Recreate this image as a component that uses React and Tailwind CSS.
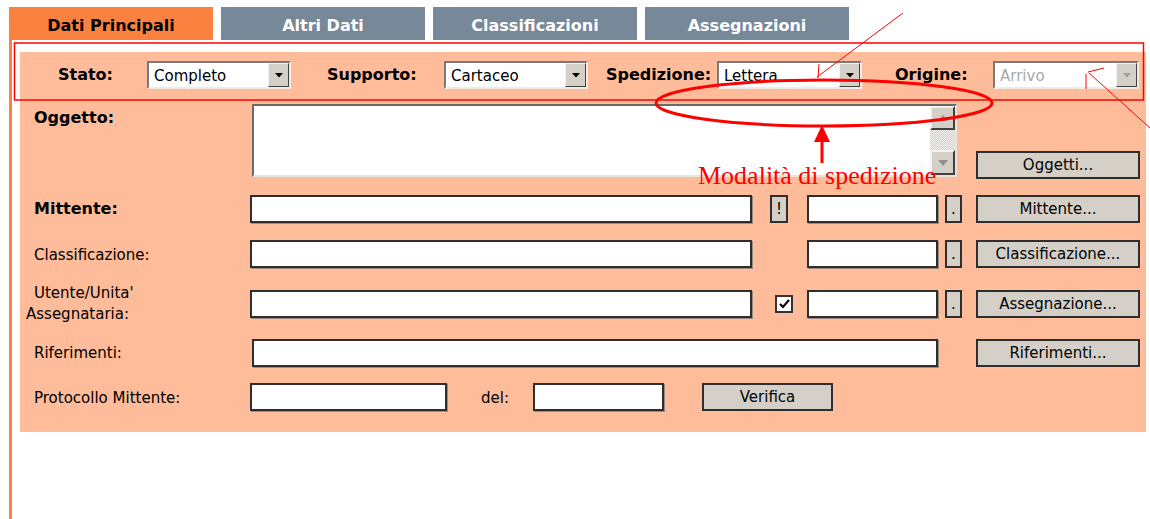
import React from "react";

const FONT = "font-['DejaVu_Sans','Liberation_Sans',sans-serif]";

function Tab({ label, active }) {
  return (
    <div
      className={`w-[204px] h-[33px] pt-[4px] flex items-center justify-center text-[16px] font-bold ${
        active ? "bg-[#fb8140] text-black" : "bg-[#778899] text-white"
      }`}
    >
      {label}
    </div>
  );
}

function Select({ className, value, disabled }) {
  return (
    <div
      className={`flex h-[28px] bg-white border-2 border-t-[#7a7a7a] border-l-[#7a7a7a] border-b-[#f0ece4] border-r-[#f0ece4] ${className}`}
    >
      <div className={`flex-1 flex items-center pl-[5px] pt-[2px] text-[15px] ${disabled ? "text-[#a8a8a8]" : "text-black"}`}>
        {value}
      </div>
      <div className="w-[21px] bg-[#d4d0c8] border border-t-[#f4f2ee] border-l-[#f4f2ee] border-b-[#404040] border-r-[#404040] flex items-center justify-center">
        <svg width="8" height="5" viewBox="0 0 8 5">
          <path d="M0 0H8L4 4.5Z" fill={disabled ? "#a0a0a0" : "#000"} />
        </svg>
      </div>
    </div>
  );
}

function Input({ className }) {
  return <div className={`h-[28px] bg-white border-2 border-[#2e2e2e] shadow-[1px_1px_0_#9a8a80] ${className}`} />;
}

function Btn({ children, className }) {
  return (
    <div
      className={`h-[28px] pt-[1px] bg-[#d4d0c8] border-2 border-[#2e2e2e] flex items-center justify-center text-[15px] text-black ${className}`}
    >
      {children}
    </div>
  );
}

function Label({ children, bold, className = "" }) {
  return <div className={`text-[15px] text-black ${bold ? "font-bold text-[16px]" : ""} ${className}`}>{children}</div>;
}

export default function App() {
  return (
    <div className={`relative w-[1150px] h-[519px] bg-white overflow-hidden ${FONT}`}>
      {/* tabs */}
      <div className="flex gap-[8px] pl-[9px] pt-[7px]">
        <Tab label="Dati Principali" active />
        <Tab label="Altri Dati" />
        <Tab label="Classificazioni" />
        <Tab label="Assegnazioni" />
      </div>

      <div className="ml-[9px] h-[479px] border-l-[3px] border-[#fb8140] pl-[8px] pt-[12px]">
        <div className="w-[1126px] h-[380px] bg-[#ffbc9a] pt-[8px]">
          {/* stato row */}
          <div className="flex items-center h-[28px] pl-[38px] pt-[2px]">
            <Label bold className="w-[89px]">Stato:</Label>
            <Select className="w-[144px]" value="Completo" />
            <Label bold className="ml-[36px] w-[117px]">Supporto:</Label>
            <Select className="w-[144px]" value="Cartaceo" />
            <Label bold className="ml-[18px] w-[111px]">Spedizione:</Label>
            <Select className="w-[145px]" value="Lettera" />
            <Label bold className="ml-[33px] w-[98px]">Origine:</Label>
            <Select className="w-[146px]" value="Arrivo" disabled />
          </div>

          {/* oggetto */}
          <div className="flex mt-[16px] pl-[14px] h-[75px]">
            <Label bold className="w-[218px] pt-[2px]">Oggetto:</Label>
            <div className="w-[705px] h-[73px] flex bg-white border-2 border-t-[#6a6a6a] border-l-[#6a6a6a] border-b-[#e8e4dc] border-r-[#e8e4dc]">
              <div className="flex-1" />
              <div className="w-[25px] flex flex-col bg-[repeating-conic-gradient(#d4d0c8_0_25%,#f2f0ec_0_50%)] bg-[length:2px_2px]">
                <div className="h-[24px] bg-[#d4d0c8] border-2 border-t-[#f4f2ee] border-l-[#f4f2ee] border-b-[#404040] border-r-[#404040] flex items-center justify-center">
                  <svg width="10" height="6" viewBox="0 0 10 6">
                    <path d="M0 6H10L5 0Z" fill="#909090" />
                  </svg>
                </div>
                <div className="flex-1" />
                <div className="h-[25px] bg-[#d4d0c8] border-2 border-t-[#f4f2ee] border-l-[#f4f2ee] border-b-[#404040] border-r-[#404040] flex items-center justify-center">
                  <svg width="10" height="6" viewBox="0 0 10 6">
                    <path d="M0 0H10L5 6Z" fill="#909090" />
                  </svg>
                </div>
              </div>
            </div>
            <div className="flex-1 flex items-end pl-[19px]">
              <Btn className="w-[164px]">Oggetti...</Btn>
            </div>
          </div>

          {/* mittente */}
          <div className="flex items-center mt-[16px] pl-[14px] h-[28px]">
            <Label bold className="w-[216px]">Mittente:</Label>
            <Input className="w-[502px]" />
            <Btn className="ml-[18px] w-[18px] text-[14px]">!</Btn>
            <Input className="ml-[19px] w-[131px]" />
            <Btn className="ml-[7px] w-[17px] text-[14px]">.</Btn>
            <Btn className="ml-[14px] w-[164px]">Mittente...</Btn>
          </div>

          {/* classificazione */}
          <div className="flex items-center mt-[17px] pl-[14px] h-[28px]">
            <Label className="w-[216px] pt-[2px]">Classificazione:</Label>
            <Input className="w-[502px]" />
            <Input className="ml-[55px] w-[131px]" />
            <Btn className="ml-[7px] w-[17px] text-[14px]">.</Btn>
            <Btn className="ml-[14px] w-[164px]">Classificazione...</Btn>
          </div>

          {/* utente */}
          <div className="flex items-center mt-[20px] pl-[6px] h-[32px]">
            <div className="w-[224px] text-[15px] leading-[21px] text-black">
              <div className="pl-[8px]">Utente/Unita'</div>
              <div>Assegnataria:</div>
            </div>
            <Input className="w-[502px]" />
            <div className="ml-[23px] w-[18px] h-[18px] bg-white border-2 border-[#333] flex items-center justify-center">
              <svg width="11" height="10" viewBox="0 0 11 10">
                <path d="M1 5L4 8L10 1" stroke="#000" strokeWidth="2.2" fill="none" />
              </svg>
            </div>
            <Input className="ml-[14px] w-[131px]" />
            <Btn className="ml-[7px] w-[17px] text-[14px]">.</Btn>
            <Btn className="ml-[14px] w-[164px]">Assegnazione...</Btn>
          </div>

          {/* riferimenti */}
          <div className="flex items-center mt-[18px] pl-[14px] h-[29px]">
            <Label className="w-[218px] pt-[2px]">Riferimenti:</Label>
            <Input className="w-[686px]" />
            <Btn className="ml-[38px] w-[164px]">Riferimenti...</Btn>
          </div>

          {/* protocollo */}
          <div className="flex items-center mt-[15px] pl-[14px] h-[29px]">
            <Label className="w-[216px] pt-[4px]">Protocollo Mittente:</Label>
            <Input className="w-[197px]" />
            <Label className="ml-[34px] w-[52px] pt-[4px]">del:</Label>
            <Input className="w-[131px]" />
            <Btn className="ml-[38px] w-[131px]">Verifica</Btn>
          </div>
        </div>
      </div>

      {/* red annotations drawn over the form */}
      <svg className="absolute inset-0 pointer-events-none" width="1150" height="519" viewBox="0 0 1150 519">
        <rect x="14.5" y="43" width="1129" height="57" fill="none" stroke="#ff0000" strokeWidth="1.5" />
        <ellipse cx="824" cy="103" rx="168" ry="23" fill="none" stroke="#ff0000" strokeWidth="3" />
        <line x1="822" y1="163" x2="822" y2="138" stroke="#ff0000" strokeWidth="3" />
        <path d="M814 142H830L822 125Z" fill="#ff0000" />
        <line x1="903" y1="13" x2="817" y2="77" stroke="#ff0000" strokeWidth="1" />
        <line x1="819" y1="64" x2="818" y2="78" stroke="#ff0000" strokeWidth="1" />
        <line x1="1089" y1="73" x2="1150" y2="128" stroke="#ff0000" strokeWidth="1" />
        <line x1="1088" y1="72" x2="1104" y2="68" stroke="#ff0000" strokeWidth="1" />
        <line x1="1086" y1="74" x2="1086" y2="89" stroke="#ff0000" strokeWidth="1" />
      </svg>
      <div className="absolute left-[698px] top-[161px] text-[26px] leading-[30px] text-[#ff0000] font-['Liberation_Serif',serif]">
        Modalità di spedizione
      </div>
    </div>
  );
}
